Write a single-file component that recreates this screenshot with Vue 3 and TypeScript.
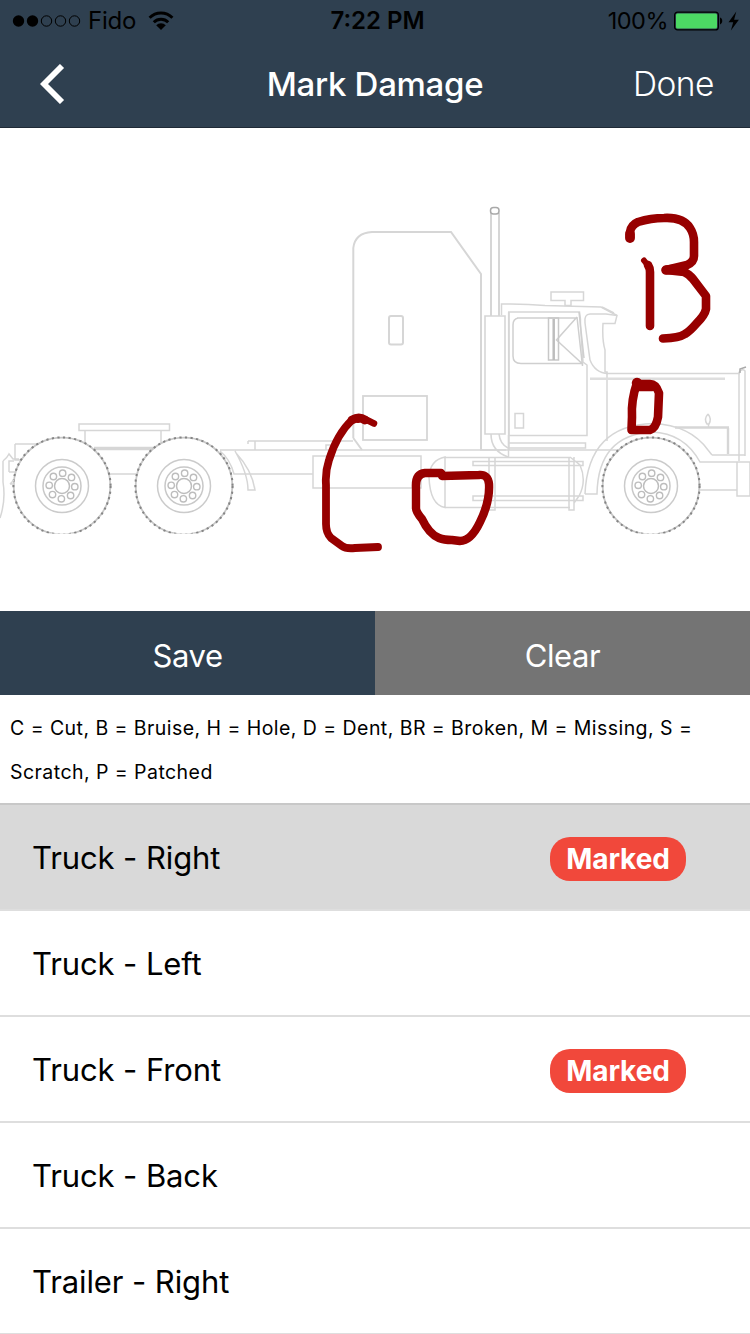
<script setup lang="ts">
interface View {
  name: string
  marked: boolean
  active: boolean
}

const views: View[] = [
  { name: 'Truck - Right', marked: true, active: true },
  { name: 'Truck - Left', marked: false, active: false },
  { name: 'Truck - Front', marked: true, active: false },
  { name: 'Truck - Back', marked: false, active: false },
  { name: 'Trailer - Right', marked: false, active: false },
]

const wheels: number[] = [62, 184, 651]
const bolts = Array.from({ length: 8 }, (_, i) => {
  const a = (i * Math.PI) / 4 + 0.05
  return { x: Math.sin(a) * 12.8, y: -Math.cos(a) * 12.8 }
})
</script>

<template>
  <div class="screen">
    <header class="header">
      <div class="status">
        <div class="side">
          <svg class="dots" width="70" height="14" viewBox="0 0 70 14">
            <circle cx="6.5" cy="7" r="5.7" />
            <circle cx="20.5" cy="7" r="5.7" />
            <g fill="none" stroke="#000" stroke-width="1">
              <circle cx="34.5" cy="7" r="5.2" />
              <circle cx="48.5" cy="7" r="5.2" />
              <circle cx="62.5" cy="7" r="5.2" />
            </g>
          </svg>
          <span class="carrier">Fido</span>
          <svg class="wifi" width="26" height="20" viewBox="0 0 26 20">
            <g fill="none" stroke="#000" stroke-width="3">
              <path d="M1.600 6.700a16.200 16.200 0 0 1 22.800 0" />
              <path d="M5.800 11.300a10.200 10.200 0 0 1 14.400 0" />
            </g>
            <path d="M8.200 14.200a6.800 6.800 0 0 1 9.600 0L13 19Z" />
          </svg>
        </div>
        <span class="clock">7:22 PM</span>
        <div class="side right">
          <span class="percent">100%</span>
          <svg class="battery" width="68" height="20" viewBox="0 0 68 20">
            <rect x="0.600" y="1.100" width="43.800" height="17.800" rx="3" fill="none" stroke="#000" stroke-width="1.200" />
            <rect x="2" y="2.500" width="41" height="15" rx="1.500" fill="#4cd964" />
            <path d="M46 6.600c3 .6 3 6.200 0 6.800Z" />
            <path d="M62.300 0.500 54.500 11.200h4.700l-2.300 8.300 8-10.800h-4.800Z" />
          </svg>
        </div>
      </div>
      <div class="nav">
        <svg class="back" width="26" height="40" viewBox="0 0 26 40">
          <path d="M22 2 4 20l18 18" fill="none" stroke="#fff" stroke-width="5.800" />
        </svg>
        <h1 class="title">Mark Damage</h1>
        <span class="done">Done</span>
      </div>
    </header>

    <svg class="canvas" width="750" height="483" viewBox="0 128 750 483">
      <defs>
        <clipPath id="artwork"><rect x="0" y="128" width="750" height="405.500" /></clipPath>
      </defs>
      <g clip-path="url(#artwork)" fill="none" stroke="#d6d6d6" stroke-width="1.500">
        <!-- sleeper -->
        <path d="M353.300 438V248Q355 233 372 232H451L481 274V450M353.300 438L362 450" stroke-width="2" />
        <rect x="389" y="316" width="14" height="28.500" rx="2" stroke-width="2" />
        <rect x="363" y="396" width="64" height="44" stroke-width="1.800" />
        <!-- exhaust stack -->
        <path d="M491 316V213M499 316V213" stroke-width="2" />
        <rect x="490.500" y="207.500" width="8.500" height="6.500" rx="3" stroke="#a9a9a9" />
        <path d="M485 316H505V434H485ZM481 316V450M491 434Q491 451 508 457M499 434Q500 444 508 448M480 450H506" stroke-width="1.600" />
        <!-- cab -->
        <path d="M501.500 315V304Q525 303.500 545 305.500L601 307L617 315.500L615 323.500H603Q602 340 605 350V372H607V441" />
        <path d="M617 315.500L606 314H590Q584 314 585 323L590 360Q595 373 608 373.500M602 307L614 313" />
        <path d="M508.800 312H579.500Q581 320 580.500 326L583 362L587 365V435.500H508.800Z" />
        <path d="M508.800 312V450" stroke-width="1.800" />
        <path d="M517 318H576M513 325Q513 319 518 318M513 325V356Q513 363.500 521 363.500H582L556.500 340L577 317M577 317L582.500 366M579 312L584 358" stroke="#cfcfcf" />
        <path d="M548.500 318H558.500V360H548.500Z" stroke="#c8c8c8" />
        <path d="M553.700 319V360" stroke="#bdbdbd" stroke-width="2.500" />
        <path d="M551 292H583.500V300.500H571V305.500H565V300.500H551Z" />
        <rect x="515" y="413.500" width="8.500" height="14.500" />
        <path d="M508.500 435V457M508.500 443H585.500V448H508.500" />
        <!-- hood and bumper -->
        <path d="M606 373.500H740M739 372V461M739 372Q743 368 745 371V456M712 455H745" />
        <path d="M590 378.700H725" stroke="#dedede" stroke-width="2.500" />
        <path d="M740 373V369L746 367" stroke="#aaa" />
        <path d="M675 427.500H729M728 428V454" stroke-width="2.400" />
        <path d="M708 414Q712 419 709 424H707Q703.500 419 708 414M708.500 424V427" />
        <path d="M585 494Q588 425 653 423.500Q690 425 708 450L712 455M585 494H597Q598 435 652 432Q684 433 700 462H750M700 490H737M737 462H750V496H737Z" />
        <!-- rear chassis -->
        <path d="M79 424H169.500V430.500H79ZM85 430.500V443M161 430.500V443M109 474H136M15 444H37M15 444V460H22M9 472V461H14M9 472H16M3 461Q7 458 9 454L13 459H19M3 461V482Q6 500 0 518" />
        <path d="M94 448.500H155" stroke="#d6d6d6" stroke-width="3.500" />
        <path d="M220 450H630M248 441H353M248 441V444M255 441V450M235 451Q248 474 248 490H255Q252 470 236 453M220 451Q230 459 234 474H313M326 450V445H333" />
        <rect x="313" y="456" width="108" height="32" />
        <!-- fuel tank and steps -->
        <path d="M445 457Q430 460 429 477Q430 505 445 507.500ZM445 457.500H570M445 507.500H570M473 461.500H583V465.500H473ZM473 496H583V500.500H473ZM489 457V510H495V457M569 457V510H574V457M570 457L580 465Q587 481 579 496L574 503" />
        <!-- wheels -->
        <g v-for="x in wheels" :key="x">
          <circle :cx="x" cy="486" r="48.300" fill="#fff" stroke="#c8c8c8" stroke-width="1.800" />
          <circle :cx="x" cy="486" r="48.600" stroke="#858585" stroke-width="2" stroke-dasharray="2.200 3.400" />
          <circle :cx="x" cy="486" r="26.500" stroke="#cbcbcb" />
          <circle :cx="x" cy="486" r="19" stroke="#c8c8c8" />
          <circle :cx="x" cy="486" r="7.500" stroke="#bdbdbd" />
          <circle v-for="(b, i) in bolts" :key="i" :cx="x + b.x" :cy="486 + b.y" r="3.200" stroke="#bdbdbd" stroke-width="1.400" />
        </g>
        <path d="M10 484L14 480M10 484H15" />
      </g>
      <!-- freehand damage marks -->
      <g fill="none" stroke="#970000" stroke-width="8.600" stroke-linecap="round" stroke-linejoin="round">
        <path d="M630 238V232Q631 225 638 222Q651 218 664 218Q683 217 690 228Q694 234 694 242V256Q694 262 687 265L666 270L684 272Q689 274 693 279L706 296V309Q705 315 696 324Q690 331 685 334Q679 338 663 338.500" />
        <path d="M630 238V234" stroke-width="9.800" />
        <path d="M666 270L678 269" stroke-width="9.500" />
        <path d="M650 326V272Q650 268 648 265" />
        <path d="M644 260.500L650 268" stroke-width="6" />
        <path d="M637 383Q631 400 632 417L631.500 430H650Q656 428 658 417L659 393Q656 384 650 384H637" />
        <path d="M637 383L638 386H652" stroke-width="10.500" />
        <path d="M358 419Q355 418 352 420Q337 434 329 460Q325 472 326 485V524Q326 533 331 538L342 546Q346 549 355 548L378 547" stroke-width="7.800" />
        <path d="M374 423.500L367 420" stroke-width="6.500" />
        <path d="M352 420Q359 416 365 420" stroke-width="8.800" />
        <path d="M441 473H425Q415 474 416 488V508Q416 512 422 519Q429 534 439 538Q444 540 452 540L460 541Q471 541 480 522Q490 502 489 484Q488 474 479 475L442 476" stroke-width="8.400" />
      </g>
    </svg>

    <div class="actions">
      <button class="action save" type="button"><span>Save</span></button>
      <button class="action clear" type="button"><span>Clear</span></button>
    </div>

    <p class="legend">
      C = Cut, B = Bruise, H = Hole, D = Dent, BR = Broken, M = Missing, S =<br />Scratch, P = Patched
    </p>

    <ul class="views">
      <li v-for="view in views" :key="view.name" class="view" :class="{ active: view.active }">
        <span class="name">{{ view.name }}</span>
        <span v-if="view.marked" class="badge"><span>Marked</span></span>
      </li>
    </ul>
  </div>
</template>

<style>
html,
body {
  margin: 0;
  background: #fff;
}
</style>

<style scoped>
.screen {
  width: 750px;
  height: 1334px;
  overflow: hidden;
  background: #fff;
  color: #000;
  font-family: Inter, "Liberation Sans", sans-serif;
}
.header {
  box-sizing: border-box;
  height: 128px;
  background: #2f4050;
  border-bottom: 1px solid #1f2a36;
}
.status {
  display: grid;
  grid-template-columns: 1fr auto 1fr;
  align-items: center;
  height: 41px;
  padding: 0 8px 0 12px;
  font-size: 24px;
  line-height: 40px;
  white-space: nowrap;
}
.side {
  display: flex;
  align-items: center;
}
.right {
  justify-content: flex-end;
}
.carrier {
  margin-left: 6px;
  letter-spacing: -0.2px;
}
.wifi {
  margin-left: 12px;
}
.clock {
  padding-left: 1px;
  font-weight: 600;
}
.percent {
  margin-right: 6px;
  font-size: 23.5px;
  letter-spacing: -0.5px;
}
.nav {
  display: grid;
  grid-template-columns: 1fr auto 1fr;
  align-items: center;
  height: 86px;
  padding: 0 36px 0 40px;
}
.title {
  margin: 0 0 0 -4px;
  color: #fff;
  font-size: 33px;
  font-weight: 500;
  line-height: 40px;
  letter-spacing: -0.3px;
}
.done {
  justify-self: end;
  color: #fff;
  font-size: 33.5px;
  font-weight: 300;
  line-height: 40px;
  letter-spacing: -0.5px;
}
.canvas {
  display: block;
}
.actions {
  display: grid;
  grid-template-columns: 1fr 1fr;
  height: 84px;
}
.action {
  margin: 0;
  padding: 6px 0 0;
  border: 0;
  color: #fff;
  font: 400 31px/40px Inter, "Liberation Sans", sans-serif;
  letter-spacing: -0.4px;
}
.save {
  background: #2f4050;
}
.clear {
  background: #747474;
}
.legend {
  box-sizing: border-box;
  height: 108px;
  margin: 0;
  padding: 11px 10px 0;
  font-size: 19.5px;
  line-height: 44px;
  letter-spacing: 0.45px;
  white-space: nowrap;
}
.views {
  margin: 0;
  padding: 0;
  list-style: none;
  border-top: 2px solid #c8c8c8;
}
.view {
  box-sizing: border-box;
  display: flex;
  align-items: center;
  justify-content: space-between;
  height: 106px;
  padding: 4px 64px 0 32px;
  border-bottom: 2px solid #dedede;
  font-size: 31px;
  line-height: 40px;
  letter-spacing: -0.1px;
}
.name {
  margin-top: -2px;
}
.active {
  background: #d9d9d9;
}
.badge {
  box-sizing: border-box;
  width: 136px;
  height: 44px;
  border-radius: 20px;
  background: #f1483b;
  color: #fff;
  font-size: 28px;
  font-weight: 700;
  line-height: 44px;
  letter-spacing: -0.1px;
  text-align: center;
}
</style>
